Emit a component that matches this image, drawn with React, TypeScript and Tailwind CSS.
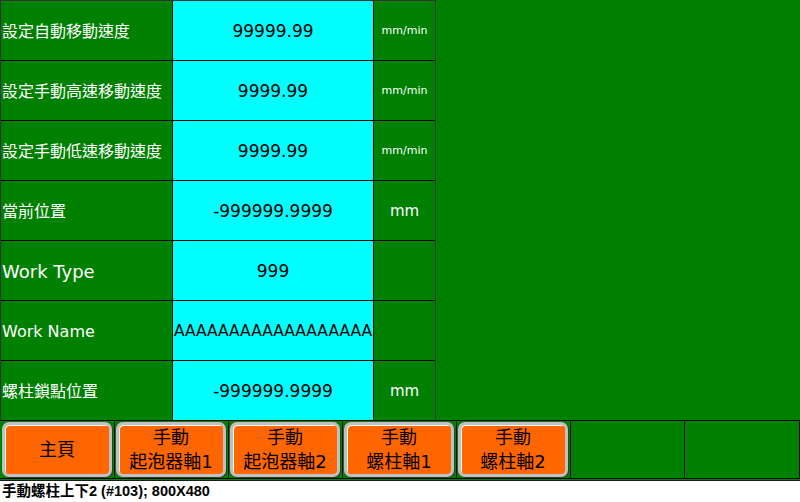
import React from 'react';

const cjk = "font-['DejaVu_Sans','Noto_Sans_CJK_TC',sans-serif]";

type Row = {
  label: string;
  labelClass: string;
  value: string;
  valueClass?: string;
  unit?: string;
  unitClass?: string;
};

const rows: Row[] = [
  { label: '設定自動移動速度', labelClass: 'text-[16px]', value: '99999.99', unit: 'mm/min', unitClass: 'text-[11px]' },
  { label: '設定手動高速移動速度', labelClass: 'text-[16px]', value: '9999.99', unit: 'mm/min', unitClass: 'text-[11px]' },
  { label: '設定手動低速移動速度', labelClass: 'text-[16px]', value: '9999.99', unit: 'mm/min', unitClass: 'text-[11px]' },
  { label: '當前位置', labelClass: 'text-[16px]', value: '-999999.9999', unit: 'mm', unitClass: 'text-[15px]' },
  { label: 'Work Type', labelClass: 'text-[18px]', value: '999' },
  { label: 'Work Name', labelClass: 'text-[16px]', value: 'AAAAAAAAAAAAAAAAAA', valueClass: 'text-[15.5px]' },
  { label: '螺柱鎖點位置', labelClass: 'text-[16px]', value: '-999999.9999', unit: 'mm', unitClass: 'text-[15px]' },
];

const buttons: string[][] = [
  ['主頁'],
  ['手動', '起泡器軸1'],
  ['手動', '起泡器軸2'],
  ['手動', '螺柱軸1'],
  ['手動', '螺柱軸2'],
];

function NavButton({ lines }: { lines: string[] }) {
  return (
    <div className="mt-[1px] ml-[2px] h-[55px] w-[110px] rounded-[7px] border-[3px] border-[#c0c0c0] bg-[#ff6600] shadow-[1px_1px_0_#3a3a3a,inset_1px_1px_0_#ffffff] flex flex-col items-center justify-center">
      {lines.map((l, i) => (
        <span key={i} className="text-[18px] leading-[24px] text-black">
          {l}
        </span>
      ))}
    </div>
  );
}

export default function App() {
  return (
    <div className={`w-[800px] h-[502px] bg-white ${cjk}`}>
      <div className="h-[481px] bg-[#008000] border-b border-[#1a1a1a] flex flex-col">
        {/* top part: parameter table */}
        <div className="h-[420px] flex">
          <div className="w-[436px] border-t border-l border-r border-[#333333] flex flex-col">
            {rows.map((r, i) => (
              <div
                key={i}
                className={`flex ${i < rows.length - 1 ? 'h-[60px] border-b border-black' : 'h-[59px]'}`}
              >
                <div className={`w-[172px] border-r border-black flex items-center pl-[1px] pt-[2px] text-white whitespace-nowrap ${r.labelClass}`}>
                  {r.label}
                </div>
                <div className={`w-[201px] border-r border-black bg-[#00ffff] flex items-center justify-center pt-[2px] overflow-hidden whitespace-nowrap text-black ${r.valueClass ?? 'text-[17px]'}`}>
                  {r.value}
                </div>
                <div className={`flex-1 flex items-center justify-center pt-[2px] text-white ${r.unitClass ?? ''}`}>
                  {r.unit}
                </div>
              </div>
            ))}
          </div>
          <div className="flex-1" />
        </div>

        {/* bottom part: buttons */}
        <div className="h-[60px] border-t border-black flex">
          {buttons.map((b, i) => (
            <div
              key={i}
              className={`${i === 0 ? 'w-[115px]' : 'w-[114px]'} h-[58px] border-r border-b border-black`}
            >
              <div className={i === 0 ? '' : '-ml-[1px]'}>
                <NavButton lines={b} />
              </div>
            </div>
          ))}
          <div className="w-[114px] h-[58px] border-r border-b border-black" />
          <div className="flex-1 h-[58px] border-r border-b border-black" />
        </div>
      </div>
      <div className="h-[21px] flex items-center pl-[2px] font-['Liberation_Sans','Noto_Sans_CJK_TC',sans-serif] font-bold text-[14.5px] text-black">
        手動螺柱上下2 (#103); 800X480
      </div>
    </div>
  );
}
